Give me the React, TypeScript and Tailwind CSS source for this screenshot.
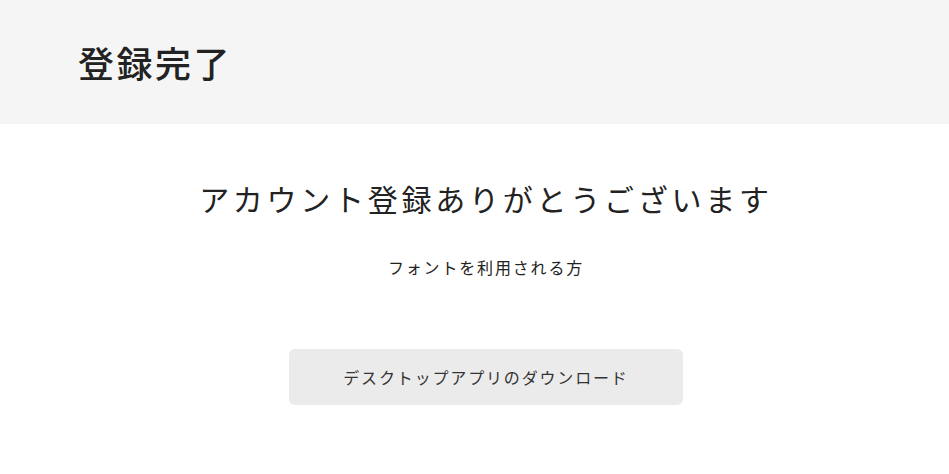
import React from "react";

export default function App() {
  const font = { fontFamily: '"Noto Sans CJK JP", "Noto Sans", sans-serif' };
  return (
    <div className="w-full min-h-screen bg-white text-[#222]" style={font}>
      <header className="h-[124px] bg-[#f5f5f5] flex items-center pl-[78px]">
        <h1 className="text-[36px] font-medium tracking-[0.07em] leading-none text-[#222]">登録完了</h1>
      </header>
      <main className="flex flex-col items-center pl-[23px] pt-[52px]">
        <h2 className="text-[30px] font-normal tracking-[0.125em] leading-[1.5] text-[#222]">
          アカウント登録ありがとうございます
        </h2>
        <p className="mt-[34px] text-[16px] tracking-[0.115em] leading-[1.5] text-[#222]">
          フォントを利用される方
        </p>
        <button className="mt-[70px] w-[394px] h-[56px] rounded-[6px] bg-[#ebebeb] text-[16px] tracking-[0.115em] text-[#333] flex items-center justify-center">
          デスクトップアプリのダウンロード
        </button>
      </main>
    </div>
  );
}
